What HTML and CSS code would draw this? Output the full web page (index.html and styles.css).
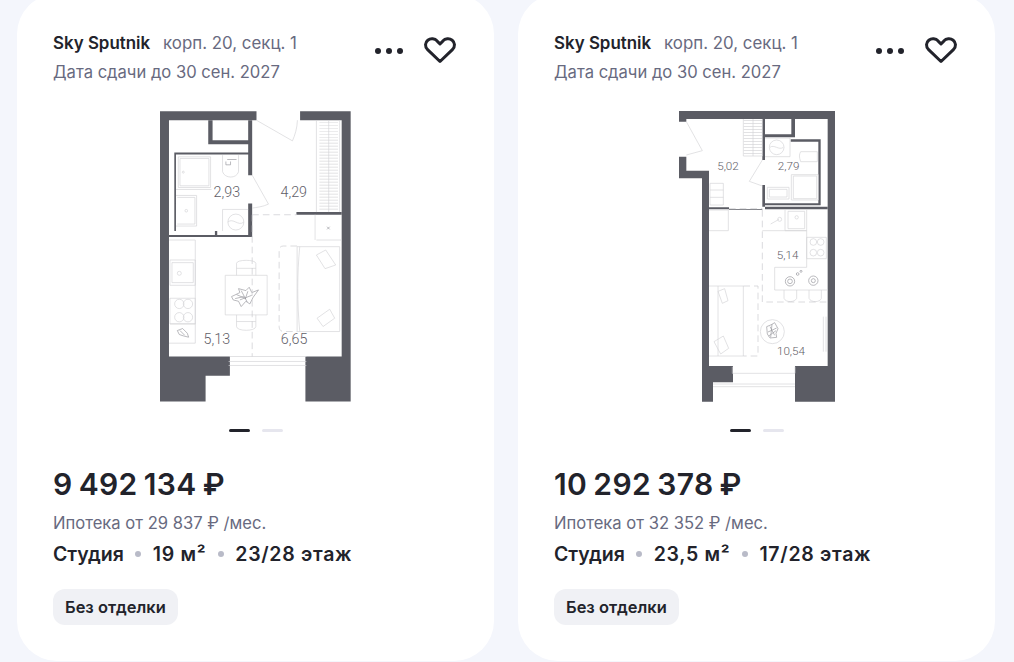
FILE: index.html
```html
<!DOCTYPE html>
<html lang="ru">
<head>
<meta charset="utf-8">
<title>Sky Sputnik</title>
<link rel="stylesheet" href="styles.css">
</head>
<body>
<main class="list">
  <article class="card">
    <header class="head">
      <div class="info">
        <div class="line1"><b class="name">Sky Sputnik</b><span class="muted">корп. 20, секц. 1</span></div>
        <div class="muted date">Дата сдачи до 30 сен. 2027</div>
      </div>
      <div class="actions">
        <span class="more"><i></i><i></i><i></i></span>
        <svg class="heart" viewBox="0 0 32 26"><path d="M16 24.5 3.6 12.6C.6 9.6 1 5.4 3.8 3.2c2.900-2.200 7-1.700 9.400.9L16 7l2.800-2.900c2.400-2.600 6.500-3.100 9.400-.9 2.800 2.200 3.200 6.400.2 9.400Z"/></svg>
      </div>
    </header>
    <div class="plan">
      <svg class="plan-a" viewBox="60 33 574 873">
        <path class="hatch" d="M567 65V332"/>
        <path class="wall" d="M60 33H350V60H87V770H270V828H197V905H60ZM481 33H633V770H606V60H481ZM497 770H633V905H497Z"/>
        <path class="wall" d="M205 60H218V120H325V60H337V225H325V132H205ZM103 157H325V163H108V393H225V405H337V310H325V405H87V411H337V405H232V393H103ZM470 336H606V344H470Z"/>
        <path class="thin" d="M350 60 458 122C466 104 472 84 473 60M337 225 386 312C370 320 350 322 337 324M530 60V336M600 60V336M567 60V336M530 420H606M526 344V420M270 770H500M266 785H500M266 797H500"/>
        <path class="thin" d="M115 170H212V262H115ZM120 175H207V257H120ZM108 268H215M108 286H170V378H108M112 292H165V372H112M248 165V215C255 236 290 236 296 215V165M248 328H325M248 328V393"/>
        <circle class="thin" cx="288" cy="366" r="24"/><path class="thin" d="M264 366C280 352 295 380 312 366"/><circle class="thin" cx="130" cy="216" r="3"/><circle class="thin" cx="139" cy="332" r="4"/>
        <path class="ink" d="M562 380 570 388M570 380 562 388M258 184V194H272V184M262 178H290"/>
        <path class="thin" d="M87 420H166V730H87M90 480H166V556H90ZM96 488H160V548H96ZM90 595H166V672H90ZM90 672H166"/>
        <circle class="thin" cx="118" cy="520" r="6"/><circle class="thin" cx="118" cy="612" r="14"/><circle class="thin" cx="144" cy="612" r="14"/><circle class="thin" cx="118" cy="652" r="14"/><circle class="thin" cx="144" cy="652" r="14"/>
        <path class="thin" d="M256 526H382V645H256ZM290 526V490C290 478 348 478 348 490V526M290 645V680C290 695 348 695 348 680V645M290 505H348M290 665H348"/>
        <path class="ink" d="M275 590 300 578 296 566 318 572 328 562 336 578 356 570 340 592 330 612 318 604 304 620 296 604 280 600ZM290 584 318 596M304 572 322 606M286 596 312 590M324 574 316 598M300 600 336 586M112 692 128 686 142 700 146 712 130 708 118 704ZM120 692 134 706"/>
        <path class="thin" d="M472 440H600V695H472ZM480 440C472 520 472 610 480 695M530 465 558 450 588 495 556 506ZM532 655 570 628 585 655 550 680Z"/>
        <path class="dash" d="M337 344H470M337 344V770M472 438H430C422 438 418 444 418 450V680C418 690 424 695 432 695H472"/>
        <text x="261" y="292">2,93</text><text x="462" y="291">4,29</text><text x="231" y="731">5,13</text><text x="463" y="731">6,65</text>
      </svg>
    </div>
    <div class="dots"><i class="on"></i><i></i></div>
    <div class="price">9 492 134 ₽</div>
    <div class="muted loan">Ипотека от 29 837 ₽ /мес.</div>
    <div class="specs"><span>Студия</span><i></i><span class="num">19 м²</span><i></i><span class="num">23/28 этаж</span></div>
    <div class="tag">Без отделки</div>
  </article>
  <article class="card">
    <header class="head">
      <div class="info">
        <div class="line1"><b class="name">Sky Sputnik</b><span class="muted">корп. 20, секц. 1</span></div>
        <div class="muted date">Дата сдачи до 30 сен. 2027</div>
      </div>
      <div class="actions">
        <span class="more"><i></i><i></i><i></i></span>
        <svg class="heart" viewBox="0 0 32 26"><path d="M16 24.5 3.6 12.6C.6 9.6 1 5.4 3.8 3.2c2.900-2.200 7-1.700 9.400.9L16 7l2.800-2.900c2.400-2.600 6.500-3.100 9.400-.9 2.800 2.200 3.200 6.400.2 9.400Z"/></svg>
      </div>
    </header>
    <div class="plan">
      <svg class="plan-b" viewBox="25 33 468 873">
        <path class="hatch" d="M247 60V165"/>
        <path class="wall" d="M25 33H493V905H373V798H471V57H47V65H25ZM25 170H47V212H115V798H187V847H127V905H94V235H25Z"/>
        <path class="wall" d="M275 57H283V103H362V57H373V112H283V180H275ZM360 118H450V316H283V320H471V328H283V255H275V328H115V322H175V330H275V320H283V310H443V125H360Z"/>
        <path class="thin" d="M47 65 95 152 47 165M275 180 236 244 275 258M218 57V168H275M247 57V168M275 57V168M283 114H358V170H283M185 800V820H373V800M127 852H373M127 860H373"/>
        <circle class="thin" cx="318" cy="142" r="22"/><path class="thin" d="M298 142C310 132 325 152 338 142"/>
        <path class="thin" d="M390 155H440V185H390C385 170 385 165 390 155ZM362 224H443V300H362ZM368 228H438V296H368ZM290 262H355V297H290ZM296 268H349V291H296ZM118 250H158V315H118ZM118 270H158M118 292H158M115 330H173V392H115"/>
        <path class="thin" d="M343 328V392H408V328M352 334H402V386H352ZM408 412H467V476H408ZM275 392H408V502H312V570H471M340 570V595C345 608 372 608 378 595V570M415 570V595C420 608 448 608 452 595V570M300 372 325 358"/>
        <circle class="thin" cx="327" cy="358" r="6"/><circle class="thin" cx="378" cy="352" r="5"/><circle class="thin" cx="428" cy="426" r="10"/><circle class="thin" cx="450" cy="426" r="10"/><circle class="thin" cx="428" cy="458" r="10"/><circle class="thin" cx="450" cy="458" r="10"/>
        <circle class="ink" cx="358" cy="544" r="14"/><circle class="ink" cx="358" cy="544" r="7"/><circle class="ink" cx="428" cy="542" r="14"/><circle class="ink" cx="428" cy="542" r="6"/><circle class="ink" cx="381" cy="522" r="4"/><circle class="ink" cx="391" cy="514" r="3"/>
        <circle class="thin" cx="305" cy="695" r="36"/>
        <path class="ink" d="M288 680 302 674 312 668 322 686 316 700 318 712 298 714 290 702ZM298 680 312 706M292 696 318 684M304 672 300 712M294 708 316 692"/>
        <path class="thin" d="M115 558H218V768H115M142 558V768M142 574 162 566 172 602 155 610ZM130 725 158 708 174 745 150 762ZM458 650V755M466 650V755"/>
        <path class="dash" d="M175 326H275M275 330V606H471M218 558H262V768H218"/>
        <text class="small" x="172" y="209">5,02</text><text class="small" x="354" y="210">2,79</text><text class="small" x="351" y="477">5,14</text><text class="small" x="361" y="766">10,54</text>
      </svg>
    </div>
    <div class="dots"><i class="on"></i><i></i></div>
    <div class="price">10 292 378 ₽</div>
    <div class="muted loan">Ипотека от 32 352 ₽ /мес.</div>
    <div class="specs"><span>Студия</span><i></i><span class="num">23,5 м²</span><i></i><span class="num">17/28 этаж</span></div>
    <div class="tag">Без отделки</div>
  </article>
</main>
</body>
</html>
```
FILE: styles.css
```css
* { box-sizing: border-box; }
html, body { height: 100%; }
body {
  margin: 0;
  height: 662px;
  overflow: hidden;
  background: #f4f6fc;
  font-family: Inter, "Noto Sans", sans-serif;
  color: #22232b;
}
.list {
  display: flex;
  gap: 24px;
  padding-left: 17px;
  transform: translateY(-6px);
}
.card {
  width: 477px;
  height: 667px;
  padding: 36px 36px 0;
  background: #fff;
  border-radius: 40px;
  display: flex;
  flex-direction: column;
}
.head { display: flex; justify-content: space-between; height: 69px; }
.info { display: flex; flex-direction: column; gap: 8px; padding-top: 3px; }
.line1 { display: flex; gap: 13px; line-height: 21px; }
.name { font-weight: 600; font-size: 16.900px; }
.muted { color: #686a80; font-size: 16.600px; }
.line1 .muted { font-size: 16.850px; }
.date { line-height: 21px; }
.actions { display: flex; align-items: center; gap: 21px; padding-right: 2px; height: 40px; }
.more { display: flex; gap: 5px; margin-top: 2px; }
.more i { width: 6px; height: 6px; border-radius: 50%; background: #22232b; }
.heart { width: 32px; height: 26px; fill: none; stroke: #22232b; stroke-width: 3; stroke-linejoin: round; overflow: visible; }
.plan { height: 291px; margin-top: 12px; display: flex; justify-content: center; }
.plan svg { height: 291px; display: block; }
.plan-a { width: 191px; }
.plan-b { width: 156px; }
.wall { fill: #5b5c64; }
.thin { fill: none; stroke: #d3d3d6; stroke-width: 2; }
.ink { fill: none; stroke: #97979d; stroke-width: 2; }
.hatch { fill: none; stroke: #d9d9dc; stroke-width: 56; stroke-dasharray: 2 7; }
.dash { fill: none; stroke: #c9c9cd; stroke-width: 2; stroke-dasharray: 20 12; }
.plan text { fill: #5f6068; font-family: Roboto, sans-serif; font-weight: 300; font-size: 43px; text-anchor: middle; }
.plan text.small { font-size: 35px; }
.dots { display: flex; justify-content: center; gap: 12px; margin-top: 27px; height: 3px; }
.dots i { width: 21px; height: 3px; border-radius: 2px; background: #e6e6ee; }
.dots .on { background: #22232b; }
.price { margin-top: 34px; font-size: 30px; line-height: 36px; font-weight: 600; letter-spacing: .4px; word-spacing: -1.900px; }
.loan { margin-top: 10px; line-height: 22px; }
.specs { display: flex; align-items: center; gap: 11.500px; margin-top: 8px; font-size: 19.500px; line-height: 24px; font-weight: 600; }
.specs .num { letter-spacing: .7px; }
.specs i { width: 6px; height: 6px; border-radius: 50%; background: #b9bbc8; }
.tag {
  align-self: flex-start;
  margin-top: 23px;
  padding: 0 12px;
  height: 36px;
  line-height: 36px;
  border-radius: 12px;
  background: #f0f1f5;
  font-size: 16.450px;
  font-weight: 600;
}
```
